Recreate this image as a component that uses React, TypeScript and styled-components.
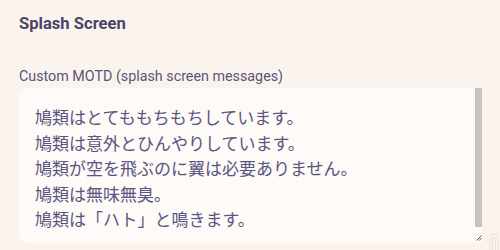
import React from 'react';
import styled, { createGlobalStyle } from 'styled-components';

const GlobalStyle = createGlobalStyle`
  html, body {
    margin: 0;
    padding: 0;
    background: #fbf4ee;
    overflow: hidden;
  }
`;

const Page = styled.div`
  height: 250px;
  padding: 12px 0 0 19px;
  box-sizing: border-box;
  font-family: Roboto, "Liberation Sans", sans-serif;
  color: #4d4768;
`;

const Title = styled.h2`
  margin: 0;
  font-size: 16.6px;
  line-height: 24px;
  font-weight: 700;
  color: #4a4467;
`;

const Label = styled.label`
  display: block;
  margin-top: 30px;
  font-size: 14.3px;
  line-height: 20px;
  color: #5a5477;
`;

const FieldRow = styled.div`
  display: flex;
  align-items: flex-end;
  gap: 7px;
  margin-top: 2px;
`;

const Field = styled.div`
  display: flex;
  width: 463px;
  height: 155px;
  border-radius: 8px 0 0 8px;
  background: #fdfaf8;
  overflow: hidden;
`;

const Motd = styled.textarea`
  flex: 1;
  min-width: 0;
  box-sizing: border-box;
  padding: 16px 16px;
  border: none;
  outline: none;
  resize: none;
  background: transparent;
  color: #5b5580;
  font-family: "Noto Sans CJK JP", "Noto Sans", sans-serif;
  font-size: 17px;
  line-height: 25.5px;
  overflow: hidden;
`;

const Rail = styled.div`
  flex: none;
  width: 7px;
  display: flex;
  flex-direction: column;
`;

const Thumb = styled.div`
  height: 139px;
  background: #c5c4c3;
`;

const Corner = styled.div`
  margin-top: auto;
  height: 11px;
  display: flex;
  align-items: center;
  justify-content: center;
`;

const Handle = styled.svg`
  flex: none;
  margin-bottom: -8px;
`;

const messages = [
  '鳩類はとてももちもちしています。',
  '鳩類は意外とひんやりしています。',
  '鳩類が空を飛ぶのに翼は必要ありません。',
  '鳩類は無味無臭。',
  '鳩類は「ハト」と鳴きます。',
];

const App: React.FC = () => (
  <>
    <GlobalStyle />
    <Page>
      <Title>Splash Screen</Title>
      <Label htmlFor="motd">Custom MOTD (splash screen messages)</Label>
      <FieldRow>
        <Field>
          <Motd id="motd" defaultValue={`${messages.join('\n')}\n`} spellCheck={false} />
          <Rail>
            <Thumb />
            <Corner>
              <svg width="6" height="6" viewBox="0 0 6 6">
                <path d="M5.5 0.5L0.5 5.5M5.5 3L3 5.5" stroke="#555" strokeWidth="1" />
              </svg>
            </Corner>
          </Rail>
        </Field>
        <Handle width="10" height="18" viewBox="0 0 10 18">
          <path d="M1 18V5a4 4 0 0 1 8 0v13" fill="none" stroke="#ece2d9" strokeWidth="1" />
          <path d="M3.5 18V6a1.5 1.5 0 0 1 3 0v12" fill="none" stroke="#ece2d9" strokeWidth="1" />
        </Handle>
      </FieldRow>
    </Page>
  </>
);

export default App;
